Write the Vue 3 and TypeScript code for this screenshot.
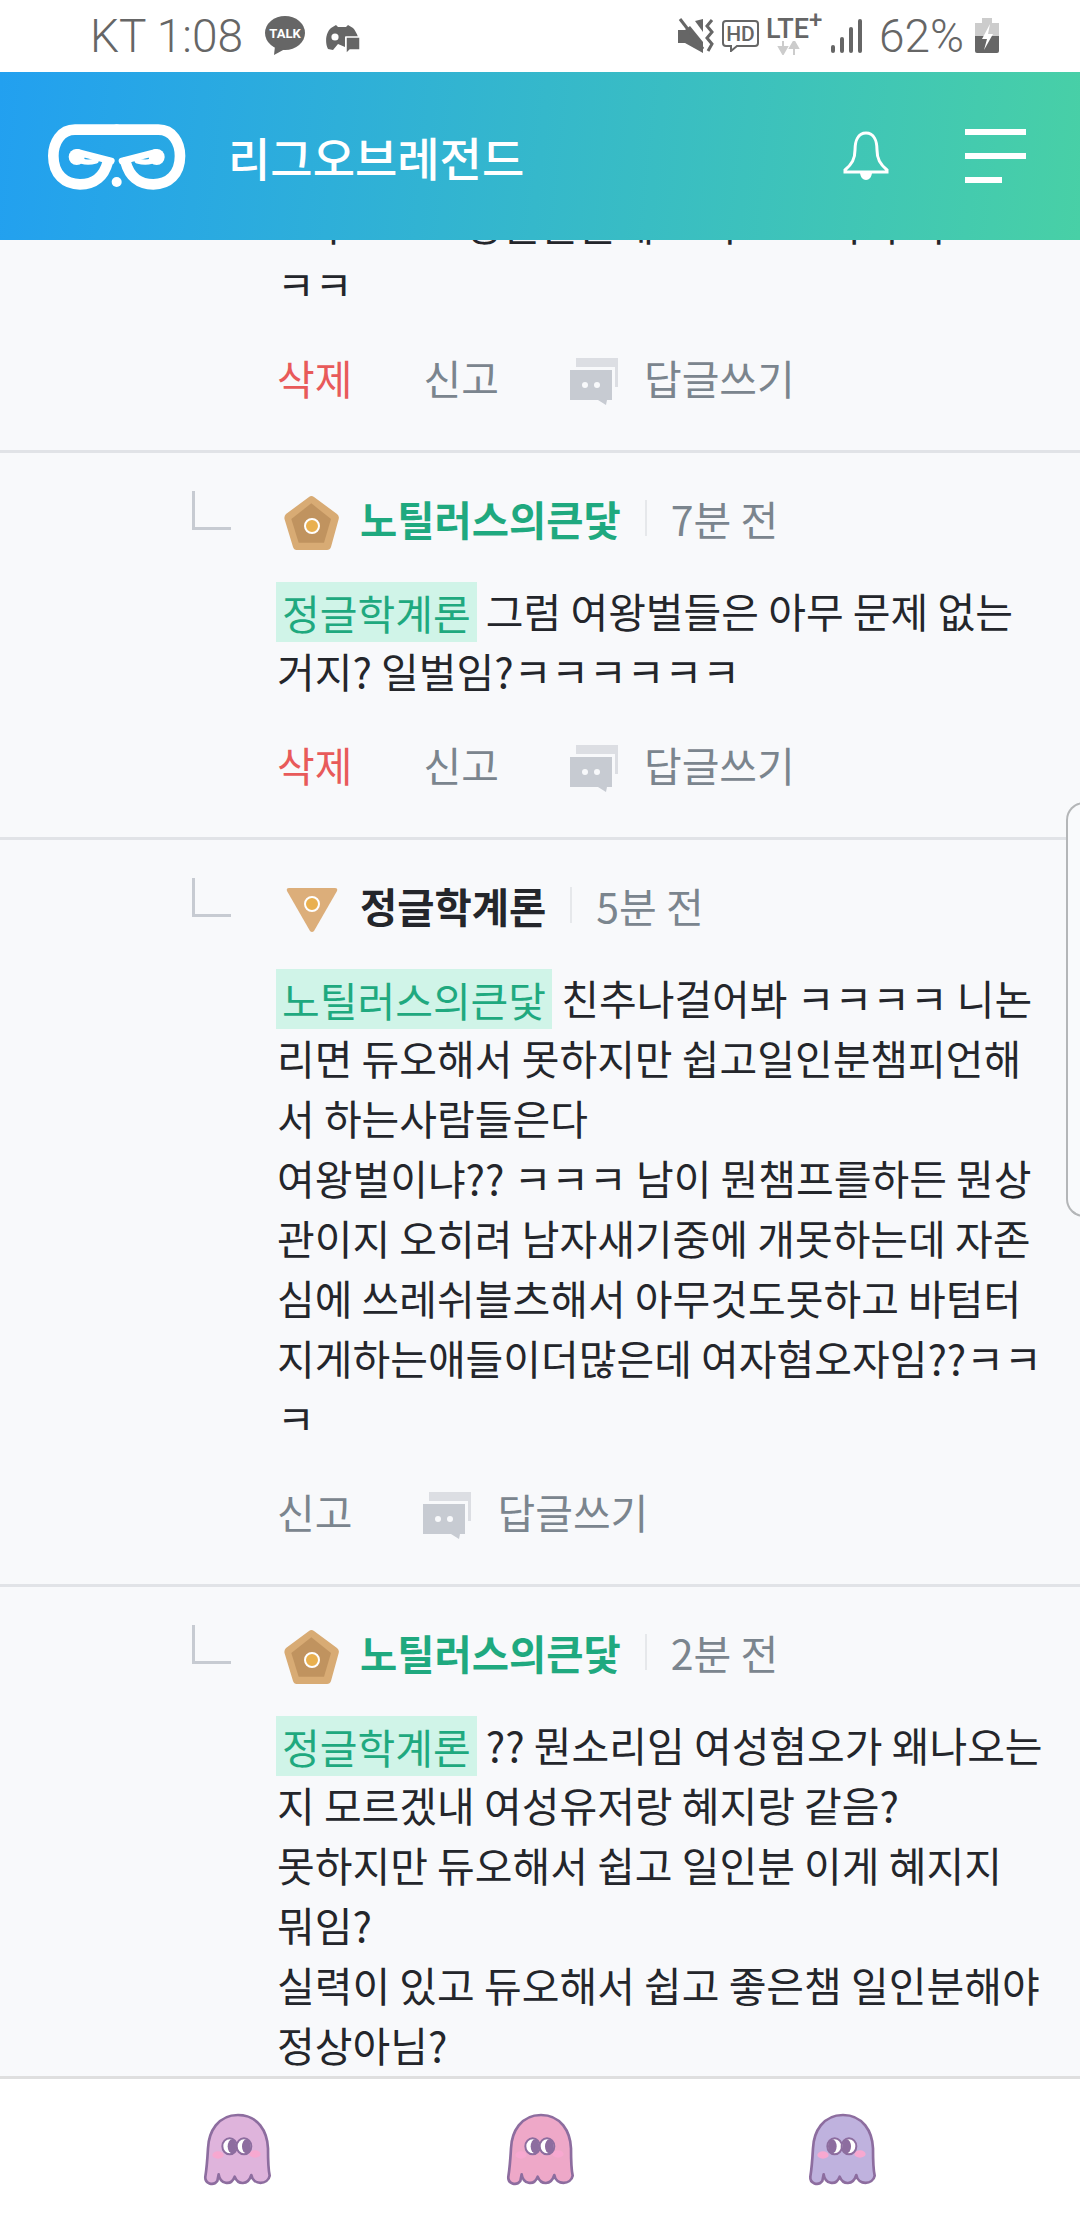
<script setup lang="ts">
type Reply = {
  name: string;
  time: string;
  rank: "bronze" | "tri";
  mention: string;
  lines: string[];
  canDelete: boolean;
};

const replies: Reply[] = [
  {
    name: "노틸러스의큰닻",
    time: "7분 전",
    rank: "bronze",
    mention: "정글학계론",
    lines: ["그럼 여왕벌들은 아무 문제 없는 거지? 일벌임?ㅋㅋㅋㅋㅋㅋ"],
    canDelete: true,
  },
  {
    name: "정글학계론",
    time: "5분 전",
    rank: "tri",
    mention: "노틸러스의큰닻",
    lines: [
      "친추나걸어봐 ㅋㅋㅋㅋ 니논리면 듀오해서 못하지만 쉽고일인분챔피언해서 하는사람들은다",
      "여왕벌이냐?? ㅋㅋㅋ 남이 뭔챔프를하든 뭔상관이지 오히려 남자새기중에 개못하는데 자존심에 쓰레쉬블츠해서 아무것도못하고 바텀터지게하는애들이더많은데 여자혐오자임??ㅋㅋㅋ",
    ],
    canDelete: false,
  },
  {
    name: "노틸러스의큰닻",
    time: "2분 전",
    rank: "bronze",
    mention: "정글학계론",
    lines: [
      "?? 뭔소리임 여성혐오가 왜나오는지 모르겠내 여성유저랑 혜지랑 같음?",
      "못하지만 듀오해서 쉽고 일인분 이게 혜지지 뭐임?",
      "실력이 있고 듀오해서 쉽고 좋은챔 일인분해야 정상아님?",
    ],
    canDelete: false,
  },
];

const ghosts = [
  { body: "#dfb4dc", flip: false },
  { body: "#eea8c8", flip: false },
  { body: "#bfb2de", flip: true },
];
</script>

<template>
  <div class="phone">
    <div class="status">
      <div class="status-left">
        <span class="status-text">KT 1:08</span>
        <svg class="talk" width="42" height="40" viewBox="0 0 42 40">
          <ellipse cx="20" cy="17" rx="20" ry="17" fill="#666" />
          <path d="M10 30 L9 39 L20 33 Z" fill="#666" />
          <text x="20" y="22" text-anchor="middle" class="talk-text">TALK</text>
        </svg>
        <svg class="chat" width="36" height="32" viewBox="0 0 36 32">
          <path d="M3 26 C-1 18 2 8 6 5 L11 2 L13 4 H21 L23 2 L28 5 C30 7 32 11 33 14 H20 V24 L13 21 L8 27 Z" fill="#666" />
          <circle cx="10" cy="14" r="3.6" fill="#fff" />
          <path d="M21 14 H35 V27 H25 L21 31 Z" fill="#666" stroke="#fff" stroke-width="1.5" />
        </svg>
      </div>
      <div class="status-right">
        <svg width="37" height="36" viewBox="0 0 37 36">
          <path d="M0 12 H7 L12 8 L25 24 V35 L7 25 H0 Z" fill="#666" />
          <path d="M17 3 L25 1 V14 Z" fill="#666" />
          <path d="M2 1 L25 31" stroke="#666" stroke-width="3" />
          <path d="M34 2 L29 8 L34 14 L29 20 L34 26 L30 33" fill="none" stroke="#666" stroke-width="3" />
        </svg>
        <svg width="37" height="32" viewBox="0 0 37 32">
          <path d="M4 1 H33 Q36 1 36 4 V23 Q36 26 33 26 H15 L9 31 V26 H4 Q1 26 1 23 V4 Q1 1 4 1 Z" fill="none" stroke="#666" stroke-width="2" />
          <text x="18.5" y="21" text-anchor="middle" class="hd-text">HD</text>
        </svg>
        <div class="lte">
          <span class="lte-text">LTE<sup>+</sup></span>
          <svg width="24" height="14" viewBox="0 0 24 14">
            <path d="M7 0 V7 M3 6 H11 L7 13 Z" stroke="#ccc" stroke-width="2" fill="#ccc" />
            <path d="M18 14 V7 M14 7 H22 L18 0 Z" stroke="#ccc" stroke-width="2" fill="#ccc" />
          </svg>
        </div>
        <svg width="31" height="34" viewBox="0 0 31 34">
          <rect x="0" y="26" width="4" height="8" rx="2" fill="#666" />
          <rect x="9" y="18" width="4" height="16" rx="2" fill="#666" />
          <rect x="18" y="8" width="4" height="26" rx="2" fill="#666" />
          <rect x="27" y="0" width="4" height="34" rx="2" fill="#666" />
        </svg>
        <span class="status-text pct">62%</span>
        <svg width="24" height="36" viewBox="0 0 24 36">
          <rect x="7" y="0" width="10" height="5" fill="#ccc" />
          <rect x="0" y="5" width="24" height="15" fill="#ccc" />
          <path d="M0 18 H24 V33 Q24 35 22 35 H2 Q0 35 0 33 Z" fill="#666" />
          <path d="M15 6 L7 21 H12 L9 32 L18 16 H13 Z" fill="#fff" />
        </svg>
      </div>
    </div>

    <header class="topbar">
      <div class="brand">
        <svg class="logo" width="160" height="90" viewBox="0 0 480 270" fill="none" stroke="#fff" stroke-linecap="round">
          <g>
            <path d="M230 56 H105 C62 56 40 95 40 135 C40 190 75 220 120 220 C165 220 192 195 203 154" stroke-width="32" />
            <path d="M214 150 L112 124" stroke-width="20" />
            <path d="M112 142 C125 154 145 156 168 150" stroke-width="16" />
            <circle cx="110" cy="138" r="24" fill="#fff" stroke="none" />
          </g>
          <g transform="translate(460 0) scale(-1 1)">
            <path d="M230 56 H105 C62 56 40 95 40 135 C40 190 75 220 120 220 C165 220 192 195 203 154" stroke-width="32" />
            <path d="M214 150 L112 124" stroke-width="20" />
            <path d="M112 142 C125 154 145 156 168 150" stroke-width="16" />
            <circle cx="110" cy="138" r="24" fill="#fff" stroke="none" />
          </g>
          <circle cx="230" cy="213" r="15" fill="#fff" stroke="none" />
        </svg>
        <span class="brand-name">리그오브레전드</span>
      </div>
      <div class="topbar-actions">
        <svg class="bell" width="46" height="50" viewBox="0 0 46 50">
          <path d="M23 2 C31 2 34 10 34 19 C34 28 37 33 44 39 V41 H2 V39 C9 33 12 28 12 19 C12 10 15 2 23 2 Z" fill="none" stroke="#fff" stroke-width="3" />
          <path d="M17 41 H29 C29 46 26 49 23 49 C20 49 17 46 17 41 Z" fill="#fff" />
        </svg>
        <div class="menu">
          <span class="bar"></span>
          <span class="bar"></span>
          <span class="bar short"></span>
        </div>
      </div>
    </header>

    <main class="feed">
      <section class="comment first">
        <p class="body">모두그르노상들을을에 그가 그그니니 이<br />ㅋㅋ</p>
        <div class="actions">
          <span class="del">삭제</span>
          <span class="act">신고</span>
          <span class="reply-btn">
            <svg width="48" height="48" viewBox="0 0 48 48">
              <path d="M6 0 H48 V29 H45 V9 H6 Z" fill="#dcdee3" />
              <path d="M0 12 H42 V42 H37 L36 47 L28 42 H0 Z" fill="#c7cbd2" />
              <circle cx="15" cy="27" r="3" fill="#f8f9fb" />
              <circle cx="27" cy="27" r="3" fill="#f8f9fb" />
            </svg>
            답글쓰기
          </span>
        </div>
      </section>

      <section v-for="(r, i) in replies" :key="i" class="comment">
        <span class="elbow"></span>
        <div class="meta">
          <svg v-if="r.rank === 'bronze'" class="rank" width="56" height="56" viewBox="0 0 56 56">
            <path d="M25 1 Q27.3 -1 30 1 L53 18 Q55.5 20 54.7 23 L47 51 Q46 54 43 54 H12.5 Q10 54 9 51 L0.5 23 Q0 20 2 18 Z" fill="#d8ab74" />
            <path d="M27.3 7.3 L47 23 L40 46.7 H14.7 L7.3 23 Z" fill="#c0935f" />
            <circle cx="28" cy="30" r="7" fill="#e9b04f" stroke="#fff" stroke-width="2" />
          </svg>
          <svg v-else class="rank" width="56" height="46" viewBox="0 0 56 46">
            <path d="M5 0 H51 Q54 0 53 3 L30 43 Q28 45 26 43 L3 3 Q2 0 5 0 Z" fill="#dcae7a" />
            <circle cx="28" cy="16" r="7" fill="#e9b04f" stroke="#fff" stroke-width="2" />
          </svg>
          <span class="name" :class="{ mine: r.rank === 'bronze' }">{{ r.name }}</span>
          <span class="sep"></span>
          <span class="time">{{ r.time }}</span>
        </div>
        <p class="body">
          <span class="mention">{{ r.mention }}</span>
          {{ r.lines[0] }}
          <template v-for="(l, j) in r.lines.slice(1)" :key="j"><br />{{ l }}</template>
        </p>
        <div v-if="i < 2" class="actions">
          <span v-if="r.canDelete" class="del">삭제</span>
          <span class="act">신고</span>
          <span class="reply-btn">
            <svg width="48" height="48" viewBox="0 0 48 48">
              <path d="M6 0 H48 V29 H45 V9 H6 Z" fill="#dcdee3" />
              <path d="M0 12 H42 V42 H37 L36 47 L28 42 H0 Z" fill="#c7cbd2" />
              <circle cx="15" cy="27" r="3" fill="#f8f9fb" />
              <circle cx="27" cy="27" r="3" fill="#f8f9fb" />
            </svg>
            답글쓰기
          </span>
        </div>
      </section>

      <div class="edge"></div>
    </main>

    <footer class="dock">
      <svg v-for="(g, i) in ghosts" :key="i" width="100" height="90" viewBox="0 0 300 270">
        <path
          d="M150 30 C90 30 62 80 60 130 C58 165 56 190 52 215 C50 235 75 245 88 228 L92 208 C96 236 128 245 140 215 C150 240 180 242 190 210 C195 242 240 240 245 212 C240 190 240 165 240 130 C238 80 210 30 150 30 Z"
          :fill="g.body"
          stroke="#8d6d9f"
          stroke-width="8"
          stroke-linejoin="round"
        />
        <ellipse cx="90" cy="150" rx="17" ry="11" fill="#f7a8d0" />
        <ellipse cx="201" cy="147" rx="17" ry="11" fill="#f7a8d0" />
        <ellipse cx="125" cy="124" rx="22" ry="24" fill="#fff" stroke="#8d6d9f" stroke-width="6" />
        <ellipse cx="168" cy="124" rx="22" ry="24" fill="#fff" stroke="#8d6d9f" stroke-width="6" />
        <ellipse :cx="g.flip ? 118 : 132" cy="124" rx="13" ry="21" fill="#8d6d9f" />
        <ellipse :cx="g.flip ? 161 : 175" cy="124" rx="13" ry="21" fill="#8d6d9f" />
      </svg>
    </footer>
  </div>
</template>

<style>
html,
body {
  margin: 0;
  background: #fff;
}
</style>

<style scoped>
.phone {
  width: 1080px;
  height: 2220px;
  display: flex;
  flex-direction: column;
  overflow: hidden;
  font-family: "Noto Sans CJK KR", "Noto Sans", sans-serif;
  background: #f8f9fb;
}

.status {
  height: 72px;
  flex: none;
  background: #fff;
  display: flex;
  align-items: center;
  justify-content: space-between;
  padding: 0 81px 0 90px;
}

.status-left,
.status-right {
  display: flex;
  align-items: center;
}

.status-text {
  font-family: Roboto, sans-serif;
  font-weight: 300;
  font-size: 46px;
  color: #666;
}

.talk {
  margin-left: 22px;
}

.chat {
  margin-left: 18px;
  margin-top: 6px;
}

.talk-text {
  font-family: Roboto, sans-serif;
  font-size: 13px;
  font-weight: 700;
  fill: #fff;
}

.status-right {
  gap: 7px;
}

.hd-text {
  font-family: Roboto, sans-serif;
  font-size: 21px;
  font-weight: 500;
  fill: #666;
}

.lte {
  display: flex;
  flex-direction: column;
  align-items: flex-start;
  width: 58px;
}

.lte svg {
  margin-left: 10px;
}

.lte-text {
  font-family: Roboto, sans-serif;
  font-size: 27px;
  font-weight: 500;
  line-height: 24px;
  color: #666;
  white-space: nowrap;
}

.lte-text sup {
  font-size: 24px;
  line-height: 0;
}

.pct {
  margin: 0 4px 0 10px;
}

.topbar {
  height: 168px;
  flex: none;
  z-index: 2;
  background: linear-gradient(96deg, #22a0f0 0%, #48d0a6 100%);
  display: flex;
  align-items: center;
  justify-content: space-between;
  padding: 0 54px 0 40px;
}

.brand {
  display: flex;
  align-items: center;
  gap: 28px;
}

.brand-name {
  color: #fff;
  font-size: 46px;
  font-weight: 500;
}

.topbar-actions {
  display: flex;
  align-items: center;
  gap: 76px;
}

.menu {
  width: 61px;
  display: flex;
  flex-direction: column;
  gap: 18px;
}

.bar {
  height: 6px;
  background: #fff;
}

.bar.short {
  width: 37px;
}

.feed {
  flex: 1;
  min-height: 0;
  position: relative;
  overflow: hidden;
  background: #f8f9fb;
}

.comment {
  position: relative;
  padding: 35px 35px 0 277px;
  border-bottom: 3px solid #e1e3e7;
  margin: 0;
}

.comment.first {
  margin-top: -47px;
  padding-top: 0;
}

.comment:nth-last-child(2) {
  border-bottom: 0;
}

.elbow {
  position: absolute;
  left: 192px;
  top: 38px;
  width: 36px;
  height: 36px;
  border-left: 3px solid #c7cbd2;
  border-bottom: 3px solid #c7cbd2;
}

.meta {
  display: flex;
  align-items: center;
  height: 60px;
  margin-left: 7px;
}

.rank {
  flex: none;
  margin-top: 12px;
}

.name {
  margin-left: 20px;
  font-size: 40.5px;
  font-weight: 700;
  color: #24262b;
}

.name.mine {
  color: #1fa97f;
}

.sep {
  width: 2px;
  height: 36px;
  margin: 0 24px;
  background: #e6e8eb;
}

.time {
  font-size: 41px;
  color: #7b858e;
}

.body {
  margin: 32px 0 0;
  font-size: 41px;
  line-height: 60px;
  color: #24262b;
}

.first .body {
  margin-top: 0;
}

.mention {
  display: inline-block;
  padding: 0 6px;
  margin-left: -1px;
  background: #d0f4e8;
  color: #1fa97f;
  transform: translateY(2px);
}

.actions {
  display: flex;
  align-items: center;
  height: 60px;
  margin-top: 34px;
  padding-bottom: 43px;
  gap: 71px;
  font-size: 41px;
}

.del {
  color: #e85a5a;
}

.act {
  color: #7b858e;
}

.reply-btn {
  display: flex;
  align-items: center;
  gap: 26px;
  color: #7b858e;
}

.reply-btn svg {
  margin-top: 10px;
}

.edge {
  position: absolute;
  right: -4px;
  top: 562px;
  width: 14px;
  height: 411px;
  background: #f9fafc;
  border: 2px solid #b4b6b8;
  border-radius: 24px 0 0 24px;
}

.dock {
  height: 144px;
  box-sizing: border-box;
  flex: none;
  background: #fff;
  border-top: 3px solid #dfdfdf;
  display: grid;
  grid-template-columns: repeat(3, 302.5px);
  padding: 26px 0 0 87px;
  justify-items: center;
  align-items: start;
}
</style>
